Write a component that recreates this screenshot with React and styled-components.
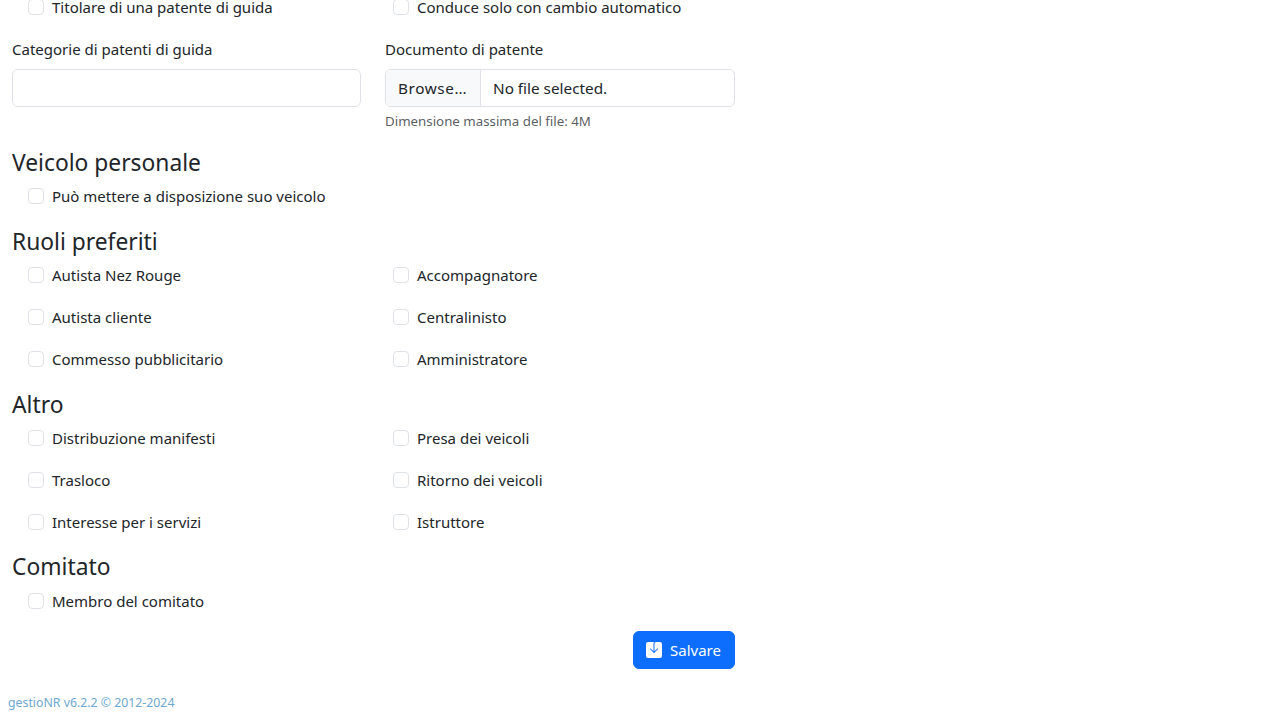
import React from 'react'
import styled, { createGlobalStyle } from 'styled-components'

const GlobalStyle = createGlobalStyle`
  html, body {
    margin: 0;
    height: 720px;
    overflow: hidden;
    background: #fff;
  }

  body {
    font-family: 'Noto Sans', 'Open Sans', sans-serif;
    font-size: 15px;
    line-height: 24px;
    color: #212529;
  }
`

const Page = styled.div`
  height: 720px;
  overflow: hidden;
  position: relative;
`

const Form = styled.form`
  width: 723px;
  margin: -5px 0 0 12px;
`

const CheckGrid = styled.div`
  display: grid;
  grid-template-columns: 365px 1fr;
  row-gap: 18px;
  padding-left: 16px;
`

const CheckRow = styled.label`
  display: flex;
  align-items: center;
  gap: 8px;
  height: 24px;
`

const CheckBox = styled.input.attrs({ type: 'checkbox' })`
  appearance: none;
  width: 16px;
  height: 16px;
  margin: 0;
  flex: none;
  background: #fff;
  border: 1px solid #dee2e6;
  border-radius: 4px;
`

const FieldRow = styled.div`
  display: grid;
  grid-template-columns: 349px 350px;
  column-gap: 24px;
  margin-top: 18px;
`

const FieldLabel = styled.label`
  display: block;
  margin-bottom: 8px;
`

const TextInput = styled.input`
  display: block;
  box-sizing: border-box;
  width: 100%;
  height: 38px;
  background: #fff;
  border: 1px solid #dee2e6;
  border-radius: 6px;
`

const FileInput = styled.div`
  display: flex;
  box-sizing: border-box;
  height: 38px;
  overflow: hidden;
  border: 1px solid #dee2e6;
  border-radius: 6px;
  font-size: 15.3px;
`

const FileButton = styled.span`
  display: flex;
  align-items: center;
  box-sizing: border-box;
  width: 95px;
  padding: 0 12px;
  letter-spacing: 0.6px;
  background: #f8f9fa;
  border-right: 1px solid #dee2e6;
`

const FileName = styled.span`
  display: flex;
  align-items: center;
  padding: 0 12px;
`

const HelpText = styled.div`
  margin-top: 4px;
  font-size: 13.3px;
  line-height: 21px;
  color: rgba(33, 37, 41, 0.75);
`

const SectionTitle = styled.h4`
  margin: ${p => p.$top}px 0 ${p => p.$bottom || 7}px;
  font-size: 22.8px;
  font-weight: 400;
  line-height: 29px;
`

const Actions = styled.div`
  display: flex;
  justify-content: flex-end;
  margin: 18px 0 0;
  width: 723px;
`

const SaveButton = styled.button`
  display: flex;
  align-items: center;
  gap: 8px;
  box-sizing: border-box;
  width: 102px;
  height: 38px;
  padding: 0 12px;
  font: inherit;
  color: #fff;
  background: #0d6efd;
  border: 1px solid #0d6efd;
  border-radius: 6px;
`

const Footer = styled.footer`
  position: absolute;
  left: 8px;
  top: 693px;
  font-size: 12.3px;
  line-height: 20px;
  color: #6ea8d0;
`

const SaveIcon = () => (
  <svg width='16' height='16' viewBox='0 0 16 16' fill='currentColor'>
    <path d='M8.5 1.5A1.5 1.5 0 0 1 10 0h4a2 2 0 0 1 2 2v12a2 2 0 0 1-2 2H2a2 2 0 0 1-2-2V2a2 2 0 0 1 2-2h6c-.314.418-.5.937-.5 1.5v7.793L4.854 6.646a.5.5 0 1 0-.708.708l3.5 3.5a.5.5 0 0 0 .708 0l3.5-3.5a.5.5 0 0 0-.708-.708L8.5 9.293V1.5z' />
  </svg>
)

const Checks = ({ items }) => (
  <CheckGrid>
    {items.map(item => (
      <CheckRow key={item}>
        <CheckBox />
        {item}
      </CheckRow>
    ))}
  </CheckGrid>
)

const App = () => (
  <Page>
    <GlobalStyle />
    <Form>
      <Checks items={['Titolare di una patente di guida', 'Conduce solo con cambio automatico']} />
      <FieldRow>
        <div>
          <FieldLabel>Categorie di patenti di guida</FieldLabel>
          <TextInput />
        </div>
        <div>
          <FieldLabel>Documento di patente</FieldLabel>
          <FileInput>
            <FileButton>Browse…</FileButton>
            <FileName>No file selected.</FileName>
          </FileInput>
          <HelpText>Dimensione massima del file: 4M</HelpText>
        </div>
      </FieldRow>
      <SectionTitle $top={16}>Veicolo personale</SectionTitle>
      <Checks items={['Può mettere a disposizione suo veicolo']} />
      <SectionTitle $top={19}>Ruoli preferiti</SectionTitle>
      <Checks
        items={[
          'Autista Nez Rouge', 'Accompagnatore',
          'Autista cliente', 'Centralinisto',
          'Commesso pubblicitario', 'Amministratore'
        ]}
      />
      <SectionTitle $top={19}>Altro</SectionTitle>
      <Checks
        items={[
          'Distribuzione manifesti', 'Presa dei veicoli',
          'Trasloco', 'Ritorno dei veicoli',
          'Interesse per i servizi', 'Istruttore'
        ]}
      />
      <SectionTitle $top={18} $bottom={8}>Comitato</SectionTitle>
      <Checks items={['Membro del comitato']} />
      <Actions>
        <SaveButton type='button'>
          <SaveIcon />
          Salvare
        </SaveButton>
      </Actions>
    </Form>
    <Footer>gestioNR v6.2.2 © 2012-2024</Footer>
  </Page>
)

export default App
